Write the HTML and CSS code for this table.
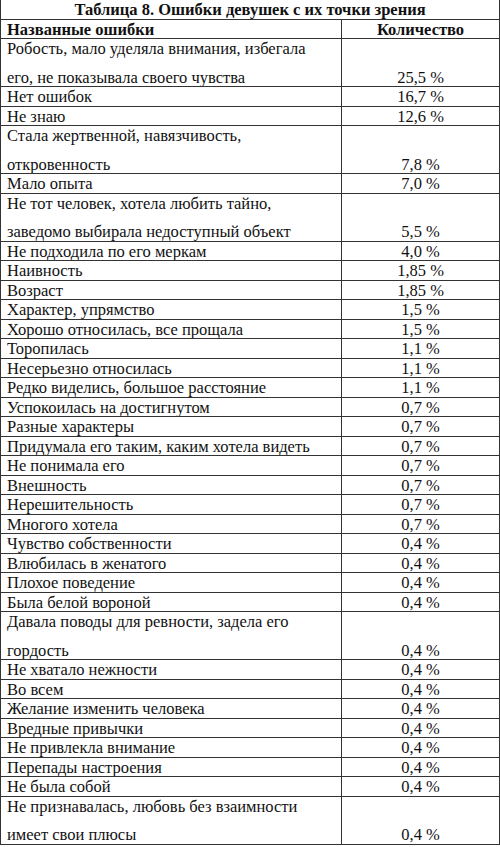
FILE: index.html
```html
<!DOCTYPE html>
<html lang="ru">
<head>
<meta charset="utf-8">
<link rel="stylesheet" href="styles.css">
</head>
<body>
<table class="tbl">
  <colgroup><col class="c-name"><col class="c-val"></colgroup>
  <tr class="title"><th colspan="2">Таблица 8. Ошибки девушек с их точки зрения</th></tr>
  <tr class="head"><th class="name">Названные ошибки</th><th class="val">Количество</th></tr>
  <tr class="two"><td class="name"><span class="l1">Робость, мало уделяла внимания, избегала</span><span class="l2">его, не показывала своего чувства</span></td><td class="val">25,5 %</td></tr>
  <tr><td class="name">Нет ошибок</td><td class="val">16,7 %</td></tr>
  <tr><td class="name">Не знаю</td><td class="val">12,6 %</td></tr>
  <tr class="two"><td class="name"><span class="l1">Стала жертвенной, навязчивость,</span><span class="l2">откровенность</span></td><td class="val">7,8 %</td></tr>
  <tr><td class="name">Мало опыта</td><td class="val">7,0 %</td></tr>
  <tr class="two"><td class="name"><span class="l1">Не тот человек, хотела любить тайно,</span><span class="l2">заведомо выбирала недоступный объект</span></td><td class="val">5,5 %</td></tr>
  <tr><td class="name">Не подходила по его меркам</td><td class="val">4,0 %</td></tr>
  <tr><td class="name">Наивность</td><td class="val">1,85 %</td></tr>
  <tr><td class="name">Возраст</td><td class="val">1,85 %</td></tr>
  <tr><td class="name">Характер, упрямство</td><td class="val">1,5 %</td></tr>
  <tr><td class="name">Хорошо относилась, все прощала</td><td class="val">1,5 %</td></tr>
  <tr><td class="name">Торопилась</td><td class="val">1,1 %</td></tr>
  <tr><td class="name">Несерьезно относилась</td><td class="val">1,1 %</td></tr>
  <tr><td class="name">Редко виделись, большое расстояние</td><td class="val">1,1 %</td></tr>
  <tr><td class="name">Успокоилась на достигнутом</td><td class="val">0,7 %</td></tr>
  <tr><td class="name">Разные характеры</td><td class="val">0,7 %</td></tr>
  <tr><td class="name">Придумала его таким, каким хотела видеть</td><td class="val">0,7 %</td></tr>
  <tr><td class="name">Не понимала его</td><td class="val">0,7 %</td></tr>
  <tr><td class="name">Внешность</td><td class="val">0,7 %</td></tr>
  <tr><td class="name">Нерешительность</td><td class="val">0,7 %</td></tr>
  <tr><td class="name">Многого хотела</td><td class="val">0,7 %</td></tr>
  <tr><td class="name">Чувство собственности</td><td class="val">0,4 %</td></tr>
  <tr><td class="name">Влюбилась в женатого</td><td class="val">0,4 %</td></tr>
  <tr><td class="name">Плохое поведение</td><td class="val">0,4 %</td></tr>
  <tr><td class="name">Была белой вороной</td><td class="val">0,4 %</td></tr>
  <tr class="two"><td class="name"><span class="l1">Давала поводы для ревности, задела его</span><span class="l2">гордость</span></td><td class="val">0,4 %</td></tr>
  <tr><td class="name">Не хватало нежности</td><td class="val">0,4 %</td></tr>
  <tr><td class="name">Во всем</td><td class="val">0,4 %</td></tr>
  <tr><td class="name">Желание изменить человека</td><td class="val">0,4 %</td></tr>
  <tr><td class="name">Вредные привычки</td><td class="val">0,4 %</td></tr>
  <tr><td class="name">Не привлекла внимание</td><td class="val">0,4 %</td></tr>
  <tr><td class="name">Перепады настроения</td><td class="val">0,4 %</td></tr>
  <tr><td class="name">Не была собой</td><td class="val">0,4 %</td></tr>
  <tr class="two"><td class="name"><span class="l1">Не признавалась, любовь без взаимности</span><span class="l2">имеет свои плюсы</span></td><td class="val">0,4 %</td></tr>
</table>
</body>
</html>
```

FILE: styles.css
```css
html, body {
  margin: 0;
  padding: 0;
  background: #fff;
}
body {
  font-family: "Liberation Serif", "Times New Roman", serif;
  font-size: 16.5px;
  color: #111;
}
.tbl {
  width: 499px;
  border-collapse: collapse;
  table-layout: fixed;
}
.c-name {
  width: 341px;
}
.c-val {
  width: 158px;
}
.tbl th, .tbl td {
  border: 1px solid #333;
  padding: 2px 0 0 6px;
  height: 16.5px;
  line-height: 16.5px;
  vertical-align: middle;
  white-space: nowrap;
  overflow: hidden;
}
.tbl th {
  font-weight: bold;
}
.title th {
  text-align: center;
  border-top: none;
  padding: 2px 0 0 0;
}
.tbl .name {
  text-align: left;
}
.tbl .val {
  text-align: center;
  padding: 2px 0 0 0;
}
.two td.val {
  vertical-align: bottom;
}
.l1, .l2 {
  display: block;
}
.l2 {
  margin-top: 12px;
}
```
